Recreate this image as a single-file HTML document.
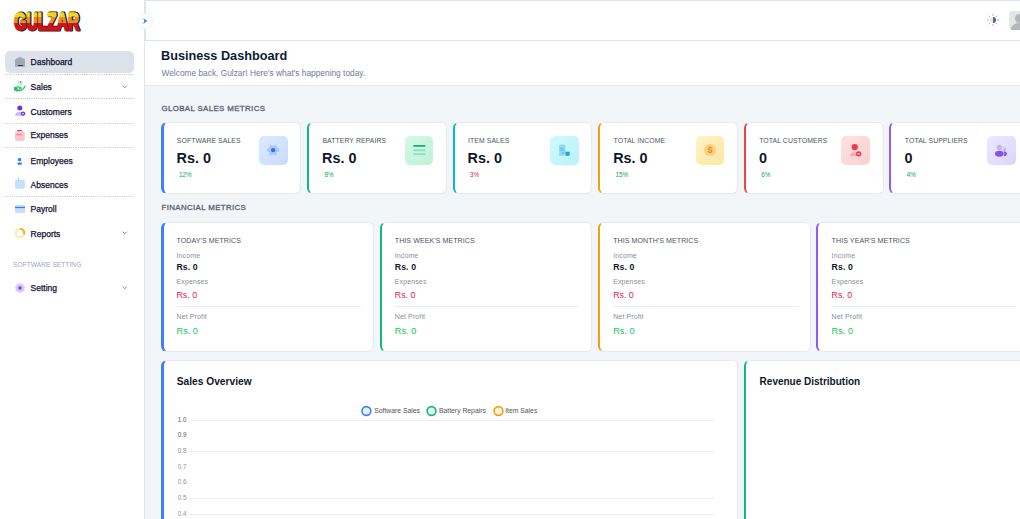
<!DOCTYPE html>
<html><head><meta charset="utf-8">
<style>
*{box-sizing:border-box;margin:0;padding:0}
html,body{width:1020px;height:519px;overflow:hidden;background:#fff;font-family:"Liberation Sans",sans-serif;color:#0f172a}
.a{position:absolute;white-space:nowrap;line-height:1}
#side{position:absolute;left:0;top:0;width:145px;height:519px;background:#fff;border-right:1px solid #dfe3ea}
.dash{position:absolute;left:5px;width:129px;height:1px;background:repeating-linear-gradient(90deg,#c9ced8 0 1.2px,transparent 1.2px 2.2px)}
.nav{font-size:8.5px;font-weight:400;-webkit-text-stroke:0.25px #111033;color:#111033;left:30.6px}
.chev{position:absolute;width:3.2px;height:3.2px;border-right:0.8px solid #9aa1ad;border-bottom:0.8px solid #9aa1ad;transform:rotate(45deg)}
#hdr{position:absolute;left:145px;top:0;width:900px;height:41px;border-top:1px solid #dfe3ea;border-bottom:1px solid #dfe3ea;border-left:1px solid #dfe3ea;background:#fff}
#main{position:absolute;left:145px;top:41px;width:900px;height:478px;background:#f3f6f9}
#title{position:absolute;left:0;top:0;width:900px;height:44.8px;background:#fff;border-bottom:1px solid #e3e7ee}
.card{position:absolute;background:#fff;border:1px solid #e6eaf0;border-radius:6px;border-left:3px solid}
.lbl{font-size:6.85px;color:#4b5563;letter-spacing:0.1px}
.big{font-size:14.4px;font-weight:700;color:#0f172a}
.pct{font-size:6.3px;color:#10a36b}
.ib{position:absolute;width:28.5px;height:28.5px;border-radius:5px;top:136.3px!important}
.sec{font-size:7.9px;font-weight:400;-webkit-text-stroke:0.3px #5b6270;color:#5b6270;letter-spacing:0.36px}
.fl{font-size:7.1px;color:#4b5563;letter-spacing:0.05px}
.fs{font-size:7px;color:#8a8fa3;letter-spacing:0.12px}
.fv{font-size:8.7px;font-weight:700;color:#0f172a;letter-spacing:0.1px}
.fr{font-size:8.8px;color:#e11d48}
.fg{font-size:9.2px;color:#22c55e}
.hr{position:absolute;height:1px;background:#e9ecf1}
.yl{font-size:6.3px;color:#555}
.gl{position:absolute;left:44px;width:525px;height:1px;background:#eceef1}
</style></head><body>

<!-- SIDEBAR -->
<div id="side">
  <svg class="a" style="left:10px;top:7px" width="78" height="28" viewBox="0 0 78 28">
    <defs><linearGradient id="lg" gradientUnits="userSpaceOnUse" x1="0" y1="4" x2="0" y2="24">
      <stop offset="0" stop-color="#f3d524"/><stop offset="0.3" stop-color="#f3d524"/>
      <stop offset="0.3" stop-color="#ec8f1e"/><stop offset="0.6" stop-color="#ec8f1e"/>
      <stop offset="0.6" stop-color="#d8101a"/><stop offset="1" stop-color="#d8101a"/></linearGradient></defs>
    <text x="5" y="23" font-family="Liberation Sans" font-weight="700" font-size="24" textLength="65" lengthAdjust="spacingAndGlyphs" fill="#1a1a1a" stroke="#1a1a1a" stroke-width="3" stroke-linejoin="round">GULZAR</text>
    <text x="4" y="22.5" font-family="Liberation Sans" font-weight="700" font-size="24" textLength="65" lengthAdjust="spacingAndGlyphs" fill="url(#lg)" stroke="url(#lg)" stroke-width="1.7" stroke-linejoin="round">GULZAR</text>
  </svg>

  <div class="a" style="left:5px;top:51px;width:129px;height:22px;background:#dde1ea;border-radius:5px"></div>
  <svg class="a" style="left:10px;top:52px" width="20" height="20" viewBox="0 0 20 20"><path d="M5 8.2 Q5 7.6 5.6 7.1 L9.2 5.2 Q10 4.8 10.8 5.2 L14.4 7.1 Q15 7.6 15 8.2 V14.3 Q15 14.8 14.5 14.8 H5.5 Q5 14.8 5 14.3Z" fill="#a2a7b4"/><rect x="7.9" y="13.1" width="5" height="0.9" fill="#1e2a55"/></svg>
  <div class="a nav" style="top:58px">Dashboard</div>
  <div class="dash" style="top:74px"></div>

  <svg class="a" style="left:10px;top:76px" width="20" height="20" viewBox="0 0 20 20"><rect x="7.9" y="4.8" width="5" height="4.7" rx="0.4" fill="#c9f0d9"/><rect x="9.9" y="5" width="0.9" height="2" fill="#2cbf6c"/><path d="M4.6 12.2 Q6 10.6 8.2 10.9 L10.6 11.4 Q11.4 11.8 10.9 12.6 Q10.3 13.3 9.3 12.8" fill="none" stroke="#2cbf6c" stroke-width="1.3" stroke-linecap="round"/><path d="M4.5 11.8 Q4.2 14.6 6.5 14.7 L10 14.6 Q12 14.2 13.4 12.6 L15 10.4" fill="none" stroke="#2cbf6c" stroke-width="1.4" stroke-linecap="round"/><path d="M4.8 12 Q5.5 11.2 7.5 11.5 L8 14.5 H6 Q4.6 14 4.8 12Z" fill="#2cbf6c"/></svg>
  <div class="a nav" style="top:83px">Sales</div>
  <svg class="a" style="left:121.6px;top:84.6px" width="6" height="4" viewBox="0 0 6 4"><path d="M0.6 0.6 L2.75 2.8 L4.9 0.6" fill="none" stroke="#737c96" stroke-width="0.85"/></svg>
  <div class="dash" style="top:98px"></div>

  <svg class="a" style="left:14px;top:104px" width="12" height="13" viewBox="0 0 12 13"><circle cx="5.8" cy="4.1" r="2.5" fill="#6d35e8"/><path d="M1 11.8 Q1.2 8.4 5 8.1 L8 8.1 Q8.6 9.5 8.6 11.8Z" fill="#cdb9f6"/><circle cx="9.1" cy="9.6" r="2.2" fill="#6d35e8"/><rect x="8" y="9.2" width="2.1" height="0.9" fill="#fff"/></svg>
  <div class="a nav" style="top:107.5px">Customers</div>
  <div class="dash" style="top:123px"></div>

  <svg class="a" style="left:14px;top:129px" width="12" height="13" viewBox="0 0 12 13"><rect x="1" y="1.9" width="9.8" height="10" rx="2.6" fill="#f8c5d3"/><rect x="3" y="0.9" width="4.8" height="1.2" rx="0.4" fill="#ec2c5a"/><rect x="2.2" y="5.3" width="5.6" height="0.9" fill="#f0708e"/></svg>
  <div class="a nav" style="top:131px">Expenses</div>
  <div class="dash" style="top:147px"></div>

  <svg class="a" style="left:10px;top:150px" width="20" height="20" viewBox="0 0 20 20"><path d="M7.9 9.3 Q7.9 7.9 9.5 7.9 Q11.2 7.9 11.2 9.3 V11 H7.9Z" fill="#2f7cf6"/><rect x="9.3" y="11" width="0.5" height="1.2" fill="#9cc0fa"/><path d="M7.5 12.4 H11.8 L11.6 14.8 H7.9Z" fill="#2f7cf6"/></svg>
  <div class="a nav" style="top:156.5px">Employees</div>

  <svg class="a" style="left:14px;top:177px" width="12" height="13" viewBox="0 0 12 13"><rect x="1" y="3" width="9.8" height="8.7" rx="1.4" fill="#c7dffb"/><rect x="3.8" y="0.9" width="1.1" height="3" fill="#8ad4f3"/></svg>
  <div class="a nav" style="top:180.5px">Absences</div>
  <div class="dash" style="top:196px"></div>

  <svg class="a" style="left:14px;top:203px" width="12" height="11" viewBox="0 0 12 11"><rect x="1" y="2" width="10" height="8" fill="#c9defb"/><rect x="1" y="3.9" width="10" height="1.2" fill="#2f7cf6"/></svg>
  <div class="a nav" style="top:204.5px">Payroll</div>

  <svg class="a" style="left:13.6px;top:226.8px" width="12" height="12" viewBox="0 0 12 12"><circle cx="6" cy="6" r="4.2" fill="none" stroke="#fde9a8" stroke-width="2"/><path d="M6 1.8 A4.2 4.2 0 0 1 10 7.5" fill="none" stroke="#f6b21b" stroke-width="2"/></svg>
  <div class="a nav" style="top:229.5px">Reports</div>
  <svg class="a" style="left:121.6px;top:231.1px" width="6" height="4" viewBox="0 0 6 4"><path d="M0.6 0.6 L2.75 2.8 L4.9 0.6" fill="none" stroke="#737c96" stroke-width="0.85"/></svg>

  <div class="a" style="left:13px;top:262px;font-size:6.6px;color:#a3a8b6;letter-spacing:0.05px">SOFTWARE SETTING</div>

  <svg class="a" style="left:13.8px;top:281.6px" width="12" height="12" viewBox="0 0 12 12"><path d="M6 0.8 L7.3 2.2 L9.3 1.8 L9.6 3.8 L11.2 5 L10.2 6.8 L10.6 8.8 L8.6 9.3 L7.5 11 L6 10 L4.5 11 L3.4 9.3 L1.4 8.8 L1.8 6.8 L0.8 5 L2.4 3.8 L2.7 1.8 L4.7 2.2Z" fill="#d9c9fb"/><circle cx="6" cy="6" r="1.7" fill="#7c3aed"/></svg>
  <div class="a nav" style="top:284px">Setting</div>
  <svg class="a" style="left:121.6px;top:285.6px" width="6" height="4" viewBox="0 0 6 4"><path d="M0.6 0.6 L2.75 2.8 L4.9 0.6" fill="none" stroke="#737c96" stroke-width="0.85"/></svg>
</div>

<!-- HEADER -->
<div id="hdr"></div>
<div class="a" style="left:136.5px;top:12.7px;width:16.5px;height:16.5px;border-radius:50%;background:#fff;border:1px solid #f0f1f4"></div>
<svg class="a" style="left:136px;top:12px" width="18" height="18" viewBox="0 0 18 18"><defs><linearGradient id="cg" x1="0" y1="0" x2="1" y2="0"><stop offset="0" stop-color="#d6e6fd"/><stop offset="0.45" stop-color="#b5d0fb"/><stop offset="0.55" stop-color="#3b82f6"/><stop offset="1" stop-color="#2f78f5"/></linearGradient></defs><path d="M5 6 L7.2 6 L11.2 9 L7.2 12 L5 12 L8.6 9Z" fill="url(#cg)"/></svg>

<svg class="a" style="left:985.8px;top:13.3px" width="14" height="14" viewBox="0 0 14 14"><path d="M11.60 7.00L12.60 7.00M10.25 10.25L10.96 10.96M7.00 11.60L7.00 12.60M3.75 10.25L3.04 10.96M2.40 7.00L1.40 7.00M3.75 3.75L3.04 3.04M7.00 2.40L7.00 1.40M10.25 3.75L10.96 3.04" stroke="#a59bc9" stroke-width="0.85" stroke-linecap="round"/><circle cx="7" cy="7" r="3.1" fill="#e6e8ec"/><path d="M7 3.9 A3.1 3.1 0 0 1 7 10.1Z" fill="#5d6b8c"/></svg>
<div class="a" style="left:1009px;top:11px;width:22px;height:19px;border-radius:4px;background:#e4e5e8;overflow:hidden">
  <div style="position:absolute;left:6px;top:3px;width:9px;height:9px;border-radius:50%;background:#b4b6bb"></div>
  <div style="position:absolute;left:1px;top:12px;width:19px;height:12px;border-radius:9px 9px 0 0;background:#b4b6bb"></div>
</div>

<!-- MAIN -->
<div id="main">
  <div id="title"></div>
</div>
<div class="a" style="left:161px;top:49.8px;font-size:12.7px;font-weight:700;color:#0f1a3a">Business Dashboard</div>
<div class="a" style="left:161.5px;top:68.7px;font-size:8.35px;color:#6d7b98">Welcome back, Gulzar! Here's what's happening today.</div>

<div class="a sec" style="left:161.5px;top:104.8px">GLOBAL SALES METRICS</div>

<!-- metric cards -->
<div class="card" style="left:161px;top:122px;width:140px;height:71.5px;border-left:3px solid #3b82f6"></div>
<div class="card" style="left:307px;top:122px;width:140px;height:71.5px;border-left:2px solid #10b981"></div>
<div class="card" style="left:453px;top:122px;width:139px;height:71.5px;border-left:2px solid #06b6d4"></div>
<div class="card" style="left:598px;top:122px;width:140px;height:71.5px;border-left:2px solid #f59e0b"></div>
<div class="card" style="left:744px;top:122px;width:140px;height:71.5px;border-left:2px solid #ef4444"></div>
<div class="card" style="left:889px;top:122px;width:140px;height:71.5px;border-left:2px solid #8b5cf6"></div>

<div class="a lbl" style="left:176.8px;top:137.8px">SOFTWARE SALES</div>
<div class="a big" style="left:176.5px;top:150.5px">Rs. 0</div>
<div class="a pct" style="left:179px;top:172px">12%</div>
<div class="ib" style="left:259px;top:136px;background:linear-gradient(135deg,#dbeafe,#c7dcfb)"><svg width="28.3" height="28.3" viewBox="0 0 28 28"><path d="M11.5 8.3 L12.8 9.6 H15.2 L16.5 8.3 L17.5 9.8 V11.5 L20 12.8 V15.2 L17.5 16.5 V18.2 L16.5 19.7 L15.2 18.4 H12.8 L11.5 19.7 L10.5 18.2 V16.5 L8 15.2 V12.8 L10.5 11.5 V9.8Z" fill="#a9c8f8"/><circle cx="14" cy="14" r="2.1" fill="#2f6ef2"/></svg></div>

<div class="a lbl" style="left:322.4px;top:137.8px">BATTERY REPAIRS</div>
<div class="a big" style="left:322px;top:150.5px">Rs. 0</div>
<div class="a pct" style="left:324.5px;top:172px">8%</div>
<div class="ib" style="left:404.6px;top:136px;background:linear-gradient(135deg,#d1fae5,#bff0d6)"><svg width="28.3" height="28.3" viewBox="0 0 28 28"><rect x="8.2" y="8.9" width="12" height="1.8" rx="0.5" fill="#10b073"/><rect x="8.2" y="13" width="12" height="2" rx="0.6" fill="#8fe0bd"/><rect x="8.2" y="17" width="12" height="1.8" rx="0.6" fill="#8fe0bd"/></svg></div>

<div class="a lbl" style="left:468px;top:137.8px">ITEM SALES</div>
<div class="a big" style="left:467.6px;top:150.5px">Rs. 0</div>
<div class="a pct" style="left:470px;top:172px;color:#e11d48">3%</div>
<div class="ib" style="left:550.2px;top:136px;background:linear-gradient(135deg,#cffafe,#b9f1fb)"><svg width="28.3" height="28.3" viewBox="0 0 28 28"><path d="M9 9.5 L10 8.3 L11 9 L12 8 L13 9 L14 8.3 L15.3 9.3 V19.5 H9Z" fill="#8edbeb"/><rect x="10.2" y="12.2" width="2.8" height="0.9" fill="#3fb3d6"/><rect x="10.2" y="14.2" width="3.8" height="0.7" fill="#63c5e0"/><rect x="12.2" y="16.4" width="1.8" height="0.9" fill="#2fa8d0"/><path d="M15.3 15.5 H19.5 V18.3 Q19.5 19.8 17.4 19.8 Q15.3 19.8 15.3 18.3Z" fill="#1ea5d8"/></svg></div>

<div class="a lbl" style="left:613.6px;top:137.8px">TOTAL INCOME</div>
<div class="a big" style="left:613.2px;top:150.5px">Rs. 0</div>
<div class="a pct" style="left:615.6px;top:172px">15%</div>
<div class="ib" style="left:695.8px;top:136px;background:linear-gradient(135deg,#fef3c7,#fde7a0)"><svg width="28.3" height="28.3" viewBox="0 0 28 28"><circle cx="13.9" cy="13.9" r="5.9" fill="#fcd083"/><text x="13.9" y="16.9" text-anchor="middle" font-family="Liberation Sans" font-size="8.5" font-weight="700" fill="#f08a1a">$</text></svg></div>

<div class="a lbl" style="left:759.2px;top:137.8px">TOTAL CUSTOMERS</div>
<div class="a big" style="left:759px;top:150.5px">0</div>
<div class="a pct" style="left:761.2px;top:172px">6%</div>
<div class="ib" style="left:841.4px;top:136px;background:linear-gradient(135deg,#fee2e2,#fcd0d0)"><svg width="28.3" height="28.3" viewBox="0 0 28 28"><circle cx="13.6" cy="10.9" r="3.1" fill="#ef3b48"/><path d="M9 20 Q9 16 13.6 16 Q16 16 17 17 L16 20Z" fill="#f7a8ae"/><circle cx="17.5" cy="17.6" r="2.6" fill="#ef3b48"/><rect x="16.4" y="17.2" width="2.2" height="1" fill="#fff"/></svg></div>

<div class="a lbl" style="left:904.8px;top:137.8px">TOTAL SUPPLIERS</div>
<div class="a big" style="left:904.6px;top:150.5px">0</div>
<div class="a pct" style="left:906.8px;top:172px">4%</div>
<div class="ib" style="left:987px;top:136px;background:linear-gradient(135deg,#ede9fe,#dcd3fb)"><svg width="28.3" height="28.3" viewBox="0 0 28 28"><circle cx="12.3" cy="11.3" r="2.6" fill="#c6b2f6"/><rect x="16.2" y="11.6" width="2.6" height="3.2" rx="0.4" fill="#c4aff6"/><ellipse cx="12.2" cy="17.5" rx="4.3" ry="3" fill="#8554ec"/><path d="M16.6 15 Q19.5 15 19.8 17.5 Q19.5 20 16.6 20 Q17.6 17.5 16.6 15Z" fill="#8554ec"/></svg></div>

<div class="a sec" style="left:161.5px;top:204px">FINANCIAL METRICS</div>

<!-- financial cards -->
<div class="card" style="left:161px;top:222px;width:213px;height:129.5px;border-left:3px solid #3b82f6"></div>
<div class="card" style="left:380px;top:222px;width:212px;height:129.5px;border-left:2px solid #10b981"></div>
<div class="card" style="left:598px;top:222px;width:213px;height:129.5px;border-left:2px solid #f59e0b"></div>
<div class="card" style="left:816px;top:222px;width:214px;height:129.5px;border-left:2px solid #8b5cf6"></div>

<div class="a fl" style="left:176.5px;top:238px">TODAY'S METRICS</div>
<div class="a fs" style="left:176.5px;top:251.6px">Income</div>
<div class="a fv" style="left:176.5px;top:262.8px">Rs. 0</div>
<div class="a fs" style="left:176.5px;top:277.9px">Expenses</div>
<div class="a fr" style="left:176.5px;top:290.5px">Rs. 0</div>
<div class="hr" style="left:176.5px;top:306px;width:184.5px"></div>
<div class="a fs" style="left:176.5px;top:312.9px">Net Profit</div>
<div class="a fg" style="left:176.5px;top:327px">Rs. 0</div>
<div class="a fl" style="left:394.8px;top:238px">THIS WEEK'S METRICS</div>
<div class="a fs" style="left:394.8px;top:251.6px">Income</div>
<div class="a fv" style="left:394.8px;top:262.8px">Rs. 0</div>
<div class="a fs" style="left:394.8px;top:277.9px">Expenses</div>
<div class="a fr" style="left:394.8px;top:290.5px">Rs. 0</div>
<div class="hr" style="left:394.8px;top:306px;width:184.5px"></div>
<div class="a fs" style="left:394.8px;top:312.9px">Net Profit</div>
<div class="a fg" style="left:394.8px;top:327px">Rs. 0</div>
<div class="a fl" style="left:613.2px;top:238px">THIS MONTH'S METRICS</div>
<div class="a fs" style="left:613.2px;top:251.6px">Income</div>
<div class="a fv" style="left:613.2px;top:262.8px">Rs. 0</div>
<div class="a fs" style="left:613.2px;top:277.9px">Expenses</div>
<div class="a fr" style="left:613.2px;top:290.5px">Rs. 0</div>
<div class="hr" style="left:613.2px;top:306px;width:184.5px"></div>
<div class="a fs" style="left:613.2px;top:312.9px">Net Profit</div>
<div class="a fg" style="left:613.2px;top:327px">Rs. 0</div>
<div class="a fl" style="left:831.6px;top:238px">THIS YEAR'S METRICS</div>
<div class="a fs" style="left:831.6px;top:251.6px">Income</div>
<div class="a fv" style="left:831.6px;top:262.8px">Rs. 0</div>
<div class="a fs" style="left:831.6px;top:277.9px">Expenses</div>
<div class="a fr" style="left:831.6px;top:290.5px">Rs. 0</div>
<div class="hr" style="left:831.6px;top:306px;width:184.5px"></div>
<div class="a fs" style="left:831.6px;top:312.9px">Net Profit</div>
<div class="a fg" style="left:831.6px;top:327px">Rs. 0</div>
<!-- SALES OVERVIEW -->
<div class="card" style="left:161px;top:360px;width:577px;height:200px;border-left:3px solid #3b82f6"></div>
<div class="card" style="left:744px;top:360px;width:290px;height:200px;border-left:2px solid #10b981"></div>
<div class="a" style="left:176.8px;top:376.5px;font-size:10.2px;font-weight:700;color:#0f172a">Sales Overview</div>
<div class="a" style="left:759.6px;top:376.8px;font-size:10px;font-weight:700;color:#0f172a">Revenue Distribution</div>
<svg class="a" style="left:360px;top:404px" width="190" height="14" viewBox="0 0 190 14"><circle cx="6.4" cy="7" r="4.4" fill="#eaf1fe" stroke="#3b82f6" stroke-width="1.6"/><circle cx="71.5" cy="7" r="4.4" fill="#e6f8f1" stroke="#10b981" stroke-width="1.6"/><circle cx="138.5" cy="7" r="4.4" fill="#fef5e6" stroke="#f59e0b" stroke-width="1.6"/></svg>
<div class="a" style="left:374.2px;top:408px;font-size:6.8px;color:#555">Software Sales</div>
<div class="a" style="left:439px;top:408px;font-size:6.8px;color:#555">Battery Repairs</div>
<div class="a" style="left:505.2px;top:408px;font-size:6.8px;color:#555">Item Sales</div>
<div class="a yl" style="left:177.8px;top:416.70px">1.0</div>
<div class="a" style="left:188.5px;top:420.00px;width:525px;height:1px;background:#ebedf0"></div>
<div class="a yl" style="left:177.8px;top:432.35px">0.9</div>
<div class="a yl" style="left:177.8px;top:448.00px;color:#8f8f8f">0.8</div>
<div class="a" style="left:188.5px;top:451.30px;width:525px;height:1px;background:#ebedf0"></div>
<div class="a yl" style="left:177.8px;top:463.65px;color:#8f8f8f">0.7</div>
<div class="a yl" style="left:177.8px;top:479.30px;color:#8f8f8f">0.6</div>
<div class="a yl" style="left:177.8px;top:494.95px;color:#8f8f8f">0.5</div>
<div class="a" style="left:188.5px;top:498.25px;width:525px;height:1px;background:#ebedf0"></div>
<div class="a yl" style="left:177.8px;top:510.60px;color:#8f8f8f">0.4</div>
<div class="a" style="left:188.5px;top:513.90px;width:525px;height:1px;background:#ebedf0"></div>
</body></html>
